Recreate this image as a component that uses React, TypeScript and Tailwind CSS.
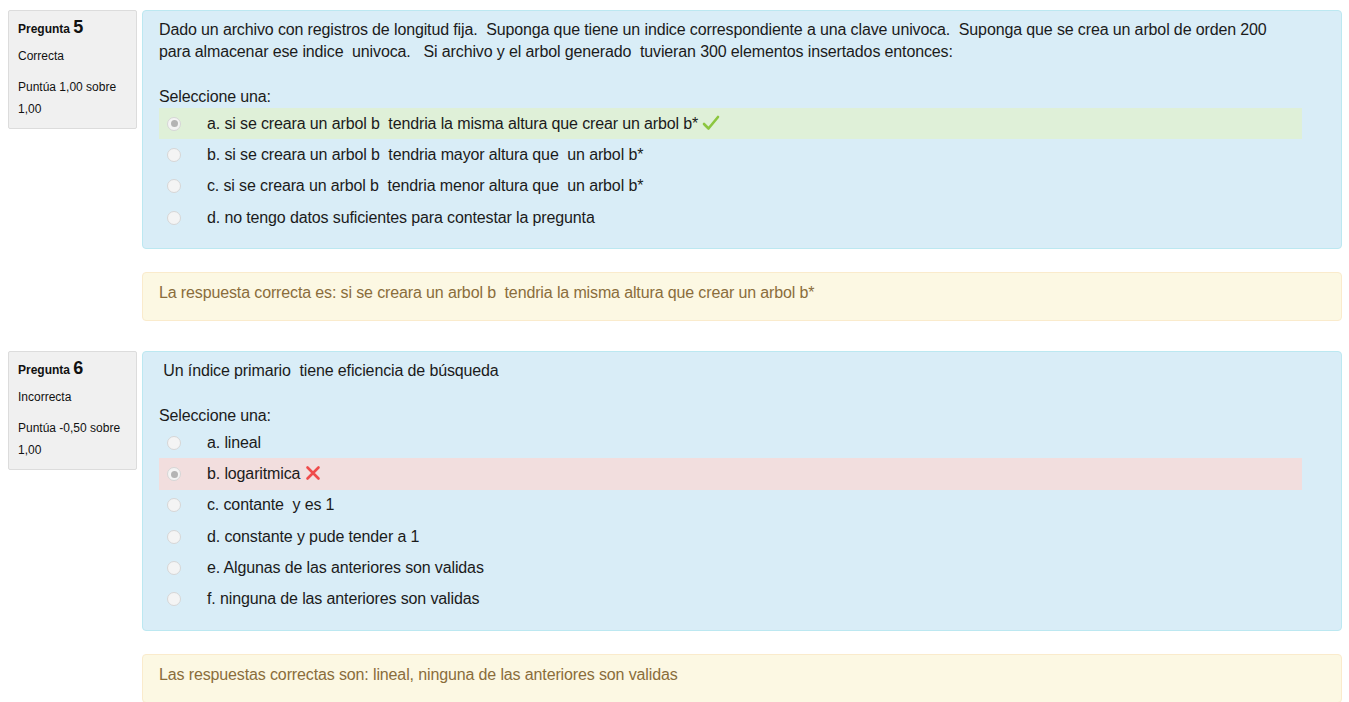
import React from 'react';

type Option = {
  label: string;
  checked?: boolean;
  state?: 'correct' | 'incorrect';
};

type Question = {
  number: number;
  status: string;
  grade: string;
  text: React.ReactNode;
  options: Option[];
  feedback: string;
};

const questions: Question[] = [
  {
    number: 5,
    status: 'Correcta',
    grade: 'Puntúa 1,00 sobre 1,00',
    text: (
      <>
        Dado un archivo con registros de longitud fija.  Suponga que tiene un indice correspondiente a una clave univoca.  Suponga que se crea un arbol de orden 200
        <br />
        para almacenar ese indice  univoca.   Si archivo y el arbol generado  tuvieran 300 elementos insertados entonces:
      </>
    ),
    options: [
      { label: 'a. si se creara un arbol b  tendria la misma altura que crear un arbol b*', checked: true, state: 'correct' },
      { label: 'b. si se creara un arbol b  tendria mayor altura que  un arbol b*' },
      { label: 'c. si se creara un arbol b  tendria menor altura que  un arbol b*' },
      { label: 'd. no tengo datos suficientes para contestar la pregunta' },
    ],
    feedback: 'La respuesta correcta es: si se creara un arbol b  tendria la misma altura que crear un arbol b*',
  },
  {
    number: 6,
    status: 'Incorrecta',
    grade: 'Puntúa -0,50 sobre 1,00',
    text: ' Un índice primario  tiene eficiencia de búsqueda',
    options: [
      { label: 'a. lineal' },
      { label: 'b. logaritmica', checked: true, state: 'incorrect' },
      { label: 'c. contante  y es 1' },
      { label: 'd. constante y pude tender a 1' },
      { label: 'e. Algunas de las anteriores son validas' },
      { label: 'f. ninguna de las anteriores son validas' },
    ],
    feedback: 'Las respuestas correctas son: lineal, ninguna de las anteriores son validas',
  },
];

const CheckIcon = () => (
  <svg width="18" height="16" viewBox="0 0 18 16" className="inline-block ml-[4px] -mt-[3px] align-middle">
    <path d="M2 9 L6.5 13.5 L16 2" fill="none" stroke="#8cc63f" strokeWidth="2.6" strokeLinecap="round" strokeLinejoin="round" />
  </svg>
);

const CrossIcon = () => (
  <svg width="16" height="16" viewBox="0 0 16 16" className="inline-block ml-[5px] -mt-[3px] align-middle">
    <path d="M2.5 2.5 L13.5 13.5 M13.5 2.5 L2.5 13.5" fill="none" stroke="#ef4b4b" strokeWidth="2.6" strokeLinecap="round" />
  </svg>
);

const Radio = ({ checked }: { checked?: boolean }) => (
  <span className="w-[14px] h-[14px] rounded-full border border-[#d6d6d6] bg-[#f4f4f4] flex items-center justify-center shrink-0">
    {checked && <span className="w-[7px] h-[7px] rounded-full bg-[#b4b4b4]" />}
  </span>
);

const InfoBox = ({ q }: { q: Question }) => {
  const first = q.grade.replace(/ 1,00$/, '');
  return (
    <div className="w-[129px] shrink-0 self-start bg-[#f0f0f0] border border-[#dcdcdc] rounded-[2px] pl-[9px] pr-[6px] pt-[7px] pb-[8px] text-[12px] text-[#111]">
      <div className="leading-[18px] font-bold">
        Pregunta <span className="text-[18px]">{q.number}</span>
      </div>
      <div className="mt-[7px] leading-[22px]">{q.status}</div>
      <div className="mt-[9px] leading-[22px]">
        {first}
        <br />
        1,00
      </div>
    </div>
  );
};

const QuestionBlock = ({ q }: { q: Question }) => (
  <div className="flex">
    <InfoBox q={q} />
    <div className="flex-1 ml-[5px]">
      <div className="bg-[#d9edf7] border border-[#bce8f1] rounded-[4px] pl-[16px] pr-[39px] pt-[8px] pb-[15px] text-[16px] tracking-[-0.13px] text-[#1b1b1b]">
        <div className="leading-[22px] whitespace-pre-wrap">{q.text}</div>
        <div className="mt-[23px] leading-[22px]">Seleccione una:</div>
        <div>
          {q.options.map((o) => (
            <div
              key={o.label}
              className={`h-[31.3px] flex items-center pl-[8px] ${
                o.state === 'correct' ? 'bg-[#dff0d8]' : o.state === 'incorrect' ? 'bg-[#f2dede]' : ''
              }`}
            >
              <Radio checked={o.checked} />
              <span className="ml-[26px] whitespace-pre-wrap">
                {o.label}
                {o.state === 'correct' && <CheckIcon />}
                {o.state === 'incorrect' && <CrossIcon />}
              </span>
            </div>
          ))}
        </div>
      </div>
      <div className="mt-[23px] bg-[#fcf8e3] border border-[#faebcc] rounded-[4px] pl-[16px] pt-[9px] pb-[16px] text-[16px] tracking-[-0.13px] leading-[22px] text-[#8a6d3b] whitespace-pre-wrap">
        {q.feedback}
      </div>
    </div>
  </div>
);

export default function App() {
  return (
    <div
      className="bg-white min-h-screen pl-[8px] pr-[7px] pt-[10px] flex flex-col gap-[30px]"
      style={{ fontFamily: '"Liberation Sans", Arial, sans-serif' }}
    >
      {questions.map((q) => (
        <QuestionBlock key={q.number} q={q} />
      ))}
    </div>
  );
}
